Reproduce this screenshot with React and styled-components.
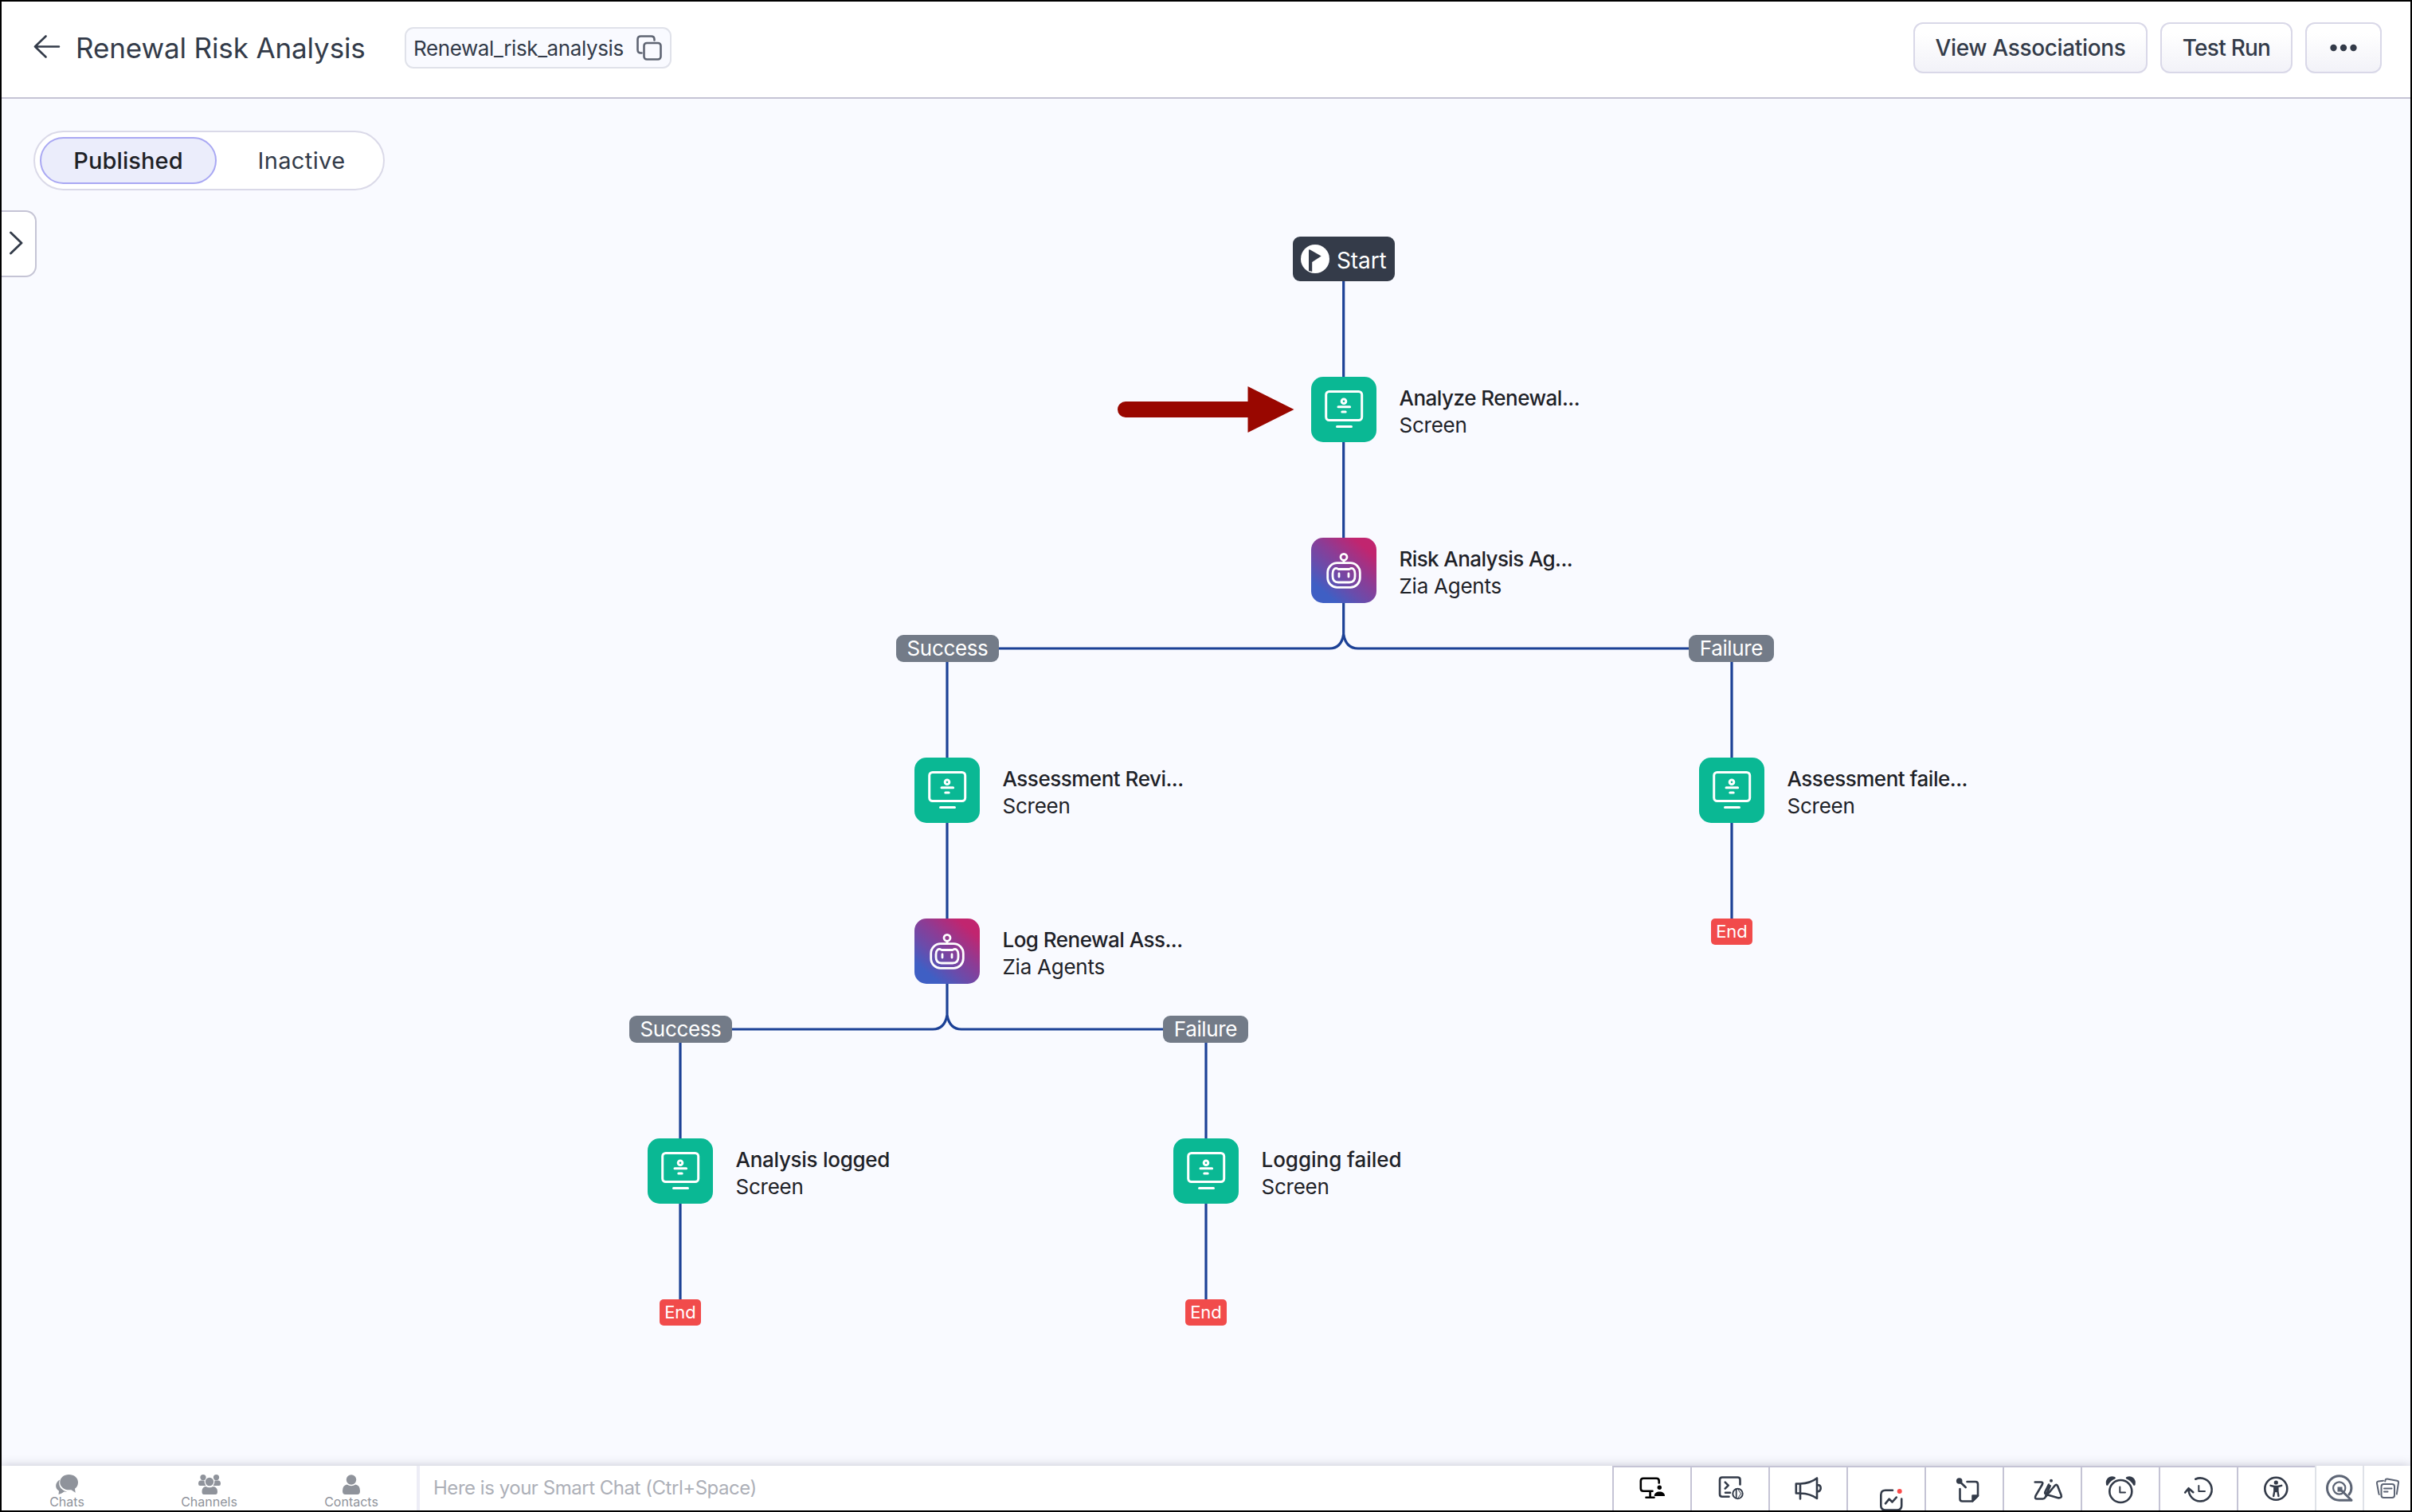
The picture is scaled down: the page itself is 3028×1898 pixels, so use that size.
import React from "react";
import styled, { createGlobalStyle } from "styled-components";

const ink = "#333b49";

const GlobalStyle = createGlobalStyle`
  * { box-sizing: border-box; }
  body {
    margin: 0;
    font-family: Inter, "Liberation Sans", sans-serif;
    color: ${ink};
  }
`;

const Frame = styled.div`
  display: flex;
  flex-direction: column;
  width: 100vw;
  height: 100vh;
  border: 2px solid #000;
  background: #f9faff;
  overflow: hidden;
`;

/* ---------- header ---------- */

const Header = styled.header`
  display: flex;
  align-items: center;
  flex: none;
  height: 122px;
  padding: 0 36px 4px 40px;
  border-bottom: 2px solid #c5c4d5;
  background: #fff;
`;

const BackButton = styled.button`
  display: flex;
  padding: 0 0 2px;
  border: 0;
  background: none;
  color: ${ink};
`;

const Title = styled.h1`
  margin: 0 49px 0 18px;
  width: 364px;
  white-space: nowrap;
  font-size: 35px;
  font-weight: 400;
  line-height: 48px;
  letter-spacing: -0.12px;
`;

const ApiName = styled.div`
  display: flex;
  align-items: center;
  justify-content: space-between;
  width: 335px;
  height: 52px;
  padding: 0 10px 0 9px;
  border: 2px solid #e0e2ea;
  border-radius: 11px;
  background: #f9faff;
  font-size: 26px;
  letter-spacing: -0.4px;
`;

const Actions = styled.div`
  display: flex;
  gap: 16px;
  margin-left: auto;
`;

const ActionButton = styled.button`
  display: flex;
  align-items: center;
  justify-content: center;
  width: ${(p) => p.$width}px;
  height: 64px;
  padding: 0;
  border: 2px solid #d9d8e8;
  border-radius: 12px;
  background: linear-gradient(#fff 20%, #f2f2f8);
  color: ${ink};
  font: 500 28px Inter, "Liberation Sans", sans-serif;
  letter-spacing: ${(p) => p.$tracking || 0}px;
`;

/* ---------- canvas ---------- */

const Canvas = styled.main`
  position: relative;
  display: flex;
  flex-direction: column;
  align-items: flex-start;
  flex: 1;
  min-height: 0;
  padding-top: 40px;
`;

const StatusSwitch = styled.div`
  display: flex;
  width: 441px;
  height: 75px;
  margin-left: 40px;
  padding: 6px;
  border: 2px solid #dad9e8;
  border-radius: 38px;
  background: #fff;
`;

const StatusOption = styled.button`
  flex: ${(p) => (p.$active ? "0 0 222px" : "1")};
  padding: 0 0 0 ${(p) => (p.$active ? 0 : 10)}px;
  border: 2px solid ${(p) => (p.$active ? "#a9a8f3" : "transparent")};
  border-radius: 30px;
  background: ${(p) => (p.$active ? "#ebedfb" : "none")};
  color: ${(p) => (p.$active ? "#1e2126" : ink)};
  font: ${(p) => (p.$active ? 500 : 400)} 29px Inter, "Liberation Sans", sans-serif;
  letter-spacing: ${(p) => (p.$active ? 0.1 : 0.4)}px;
`;

const PanelToggle = styled.button`
  display: flex;
  align-items: center;
  width: 44px;
  height: 84px;
  margin-top: 25px;
  padding: 0 0 3px 10px;
  border: 2px solid #c5c4d5;
  border-left: 0;
  border-radius: 0 14px 14px 0;
  background: #fff;
  color: ${ink};
`;

const Connectors = styled.svg`
  position: absolute;
  top: 0;
  left: 0;
  fill: none;
  stroke: #1c4196;
  stroke-width: 3.2;
`;

const Placed = styled.div`
  position: absolute;
  left: ${(p) => p.$x}px;
  top: ${(p) => p.$y}px;
`;

const StartNode = styled(Placed)`
  display: flex;
  align-items: center;
  gap: 9px;
  width: 128px;
  height: 56px;
  padding-left: 10px;
  border-radius: 9px;
  background: #343b49;
  color: #fff;
  font-size: 28px;
  letter-spacing: -0.1px;
`;

const StartLabel = styled.span`
  padding-top: 3px;
`;

const StepNode = styled(Placed)`
  display: flex;
  align-items: center;
  gap: 28.5px;
`;

const Tile = styled.div`
  width: 82px;
  height: 82px;
  border-radius: 15px;
  background: ${(p) =>
    p.$kind === "agent"
      ? "linear-gradient(40deg, #3f5fc4 18%, #6a4cab 38%, #8c3c95 58%, #c1256f 84%)"
      : "#0ab894"};
`;

const StepText = styled.div`
  display: flex;
  flex-direction: column;
  padding-top: 6px;
  color: #1f2228;
  font-size: 26px;
  line-height: 34px;
  white-space: nowrap;
  letter-spacing: -0.25px;
`;

const StepName = styled.span`
  font-weight: 500;
  letter-spacing: ${(p) => p.$tracking}px;
`;

const BranchChip = styled(Placed)`
  display: flex;
  align-items: center;
  justify-content: center;
  width: ${(p) => (p.$wide ? 129 : 107)}px;
  height: 34px;
  padding-bottom: 1px;
  border-radius: 9px;
  background: #737b88;
  color: #fff;
  font-size: 26px;
  letter-spacing: -0.35px;
`;

const EndChip = styled(Placed)`
  display: flex;
  align-items: center;
  justify-content: center;
  width: 52px;
  height: 33px;
  padding-bottom: 1px;
  border-radius: 5px;
  background: #f14b4b;
  color: #fff;
  font-size: 22px;
`;

/* ---------- footer ---------- */

const Footer = styled.footer`
  position: relative;
  display: flex;
  flex: none;
  height: 56px;
  background: #fff;
  box-shadow: 0 0 12px rgba(60, 60, 90, 0.28);
`;

const ChatTabs = styled.nav`
  display: flex;
  justify-content: center;
  width: 521px;
`;

const ChatTab = styled.div`
  display: flex;
  flex-direction: column;
  align-items: center;
  flex: none;
  width: 178.5px;
  padding-top: 11px;
  color: #8f939b;
  font-size: 16px;
  line-height: 18px;
`;

const SmartChat = styled.div`
  flex: 1;
  padding-left: 17px;
  border-left: 4px solid #ededf6;
  color: #adb0b8;
  font-size: 24px;
  line-height: 55px;
  letter-spacing: -0.47px;
`;

const Tool = styled.div`
  width: 98px;
  border-top: 2px solid #c5c4d5;
  border-left: 2px solid #c5c4d5;
  color: ${(p) => (p.$solid ? "#000" : ink)};
  overflow: hidden;
`;

const SideTool = styled.div`
  width: 60px;
  border-left: 2px solid #dfe2e8;
  color: #5d6575;
  overflow: hidden;
`;

const Glyph = styled.svg`
  display: block;
  fill: none;
  stroke: currentColor;
  stroke-width: ${(p) => p.$weight || 2.6};
  stroke-linecap: round;
  stroke-linejoin: round;
`;

/* ---------- icons ---------- */

const BackIcon = () => (
  <Glyph width="35" height="30" $weight={2.6}>
    <path d="M32 14.500H2M15.500 1.500 2 14.500 15.500 27.500" />
  </Glyph>
);

const CopyIcon = () => (
  <Glyph width="32" height="32" $weight={2.6} color="#5f6573">
    <rect x="9.500" y="10" width="21" height="20.500" rx="3.500" />
    <path d="M6.500 22.500H5.500Q1.500 22.500 1.500 18.500V5.500Q1.500 1.500 5.500 1.500H18.500Q22.500 1.500 22.500 5.500V6.500" />
  </Glyph>
);

const DotsIcon = () => (
  <svg width="34" height="10" fill="currentColor">
    <circle cx="4.500" cy="5" r="4.200" />
    <circle cx="17" cy="5" r="4.200" />
    <circle cx="29.500" cy="5" r="4.200" />
  </svg>
);

const ChevronIcon = () => (
  <Glyph width="20" height="30" $weight={2.8}>
    <path d="M1.500 2 15 15 1.500 28" />
  </Glyph>
);

const FlagIcon = () => (
  <svg width="36" height="36">
    <circle cx="18" cy="18" r="18" fill="#fff" />
    <path d="M10 7.500Q10 5.600 11.700 6.500L25.700 14.600 14.200 22V34L10 33Z" fill="#343b49" />
  </svg>
);

const ScreenIcon = () => (
  <Glyph width="82" height="82" viewBox="0 0 82 82" color="#fff" $weight={3}>
    <rect x="18.700" y="18.500" width="45" height="36" rx="4" />
    <circle cx="41" cy="30.700" r="2.800" />
    <path d="M34 37.800H48.600M38.800 43.900H43.200M32.500 62.500H50.500" />
  </Glyph>
);

const RobotIcon = () => (
  <Glyph width="82" height="82" viewBox="0 0 82 82" color="#fff" $weight={2.8}>
    <circle cx="41" cy="24.300" r="4" />
    <rect x="20.700" y="31.700" width="40.600" height="30.600" rx="12" />
    <path d="M41 28.500V31.500M35 45V49M47 45V49" />
    <path d="M34 39.500C30 36.500 27 40 27 45V48.500Q27 56 34 56H48Q55 56 55 48.500V45C55 40 52 36.500 48 39.500Z" />
  </Glyph>
);

const ChatsIcon = () => (
  <svg width="28" height="25" fill="currentColor">
    <path d="M5 6.500C-1 10-1.500 17.500 4 20.500L3.500 25Q8 23.500 10.500 21.500L14.500 21.700C6 19.500 2.500 13.500 5 6.500Z" />
    <path d="M16.500 0C23 0 28 4.200 28 9.700 28 13.200 26.500 16 24 17.800L24.700 22.700 19.500 19.200C11 20.300 5.300 15.500 5.300 9.700 5.300 4.200 10 0 16.500 0Z" />
  </svg>
);

const ChannelsIcon = () => (
  <svg width="28" height="25" fill="currentColor">
    <circle cx="6" cy="3.600" r="3.600" />
    <circle cx="22.500" cy="3.600" r="3.600" />
    <circle cx="14" cy="9" r="5.200" />
    <path d="M3 7.500H7.500Q7.500 12 9.500 14H2Q0 14 0 11.500 0 7.500 3 7.500ZM25 7.500H20.500Q20.500 12 18.500 14H26Q28 14 28 11.500 28 7.500 25 7.500ZM9.500 15Q14 17.500 18.500 15 24 15.500 24 21.500 24 25 21.500 25H7Q4.500 25 4.500 21.500 4.500 15.500 9.500 15Z" />
  </svg>
);

const ContactsIcon = () => (
  <svg width="24" height="25" fill="currentColor">
    <circle cx="12" cy="6.500" r="6.200" />
    <path d="M6.500 12.500Q12 16 17.500 12.500 23 13.500 23 20.500 23 25 19.500 25H4.500Q1 25 1 20.500 1 13.500 6.500 12.500Z" />
  </svg>
);

const toolIcons = [
  <>
    <path d="M56.700 19.500V17Q56.700 13.800 53.500 13.800H37Q33.800 13.800 33.800 17V26.500Q33.800 29.700 37 29.700H48.500M45.600 30V37.500M40.500 37.800H50.500" />
    <circle cx="57.300" cy="25.300" r="2.700" fill="currentColor" stroke="none" />
    <path d="M50.700 36C50.700 32.500 53.500 30.600 57.400 30.600S64 32.500 64 36Z" fill="currentColor" stroke="none" />
  </>,
  <>
    <path d="M60.500 21.500V15.500Q60.500 12.500 57.500 12.500H38Q35 12.500 35 15.500V33.700Q35 36.700 38 36.700H46.500M41.700 18.700 45.700 22.700 41.700 26.700M42 31.700H48" />
    <circle cx="57.500" cy="33" r="6.200" strokeWidth="2" />
    <path d="M55.700 28.500V37.500" strokeWidth="1.800" />
    <path d="M58.500 28.500 61.500 33 58.500 37.500" strokeWidth="1" />
  </>,
  <path d="M38 20.500H32.800V32.500H38ZM38 20.500Q51 20 59 13.500V39Q51 33 38 32.500V39.500M59.500 22Q63.700 22 63.700 26T59.500 30.500" />,
  <>
    <path d="M56 28.800H47Q41.300 28.800 41.300 34.500V47.800Q41.300 53.500 47 53.500H61.500Q67.200 53.500 67.200 47.800V39.500M47 45.300 51.700 39.700 55.500 43.500 60.700 37.600" />
    <circle cx="64.700" cy="30" r="3" fill="#fa4b4b" stroke="none" />
  </>,
  <>
    <circle cx="41.700" cy="17" r="3.800" fill="currentColor" stroke="none" />
    <path d="M42 17.500 49.700 25M51.500 18H62Q65 18 65 21V35.500L58 42.500H45.500Q42.500 42.500 42.500 39.500V27" />
    <path d="M58.500 35.500H65L58.500 42Z" fill="currentColor" />
  </>,
  <>
    <path d="M38.700 18.500H46Q49.500 18.500 47.800 21.500L39.500 35.700Q37.700 39.500 41.500 39.500H48.500Q50.500 39.500 51.700 37.300L57.700 23.300M56 21.500 51.500 30.500Q50.500 33 53 34L67.500 38.300Q73 38.800 71.500 34.500L67.200 23.500Q65.700 20.500 63.500 23L52.500 36.500" />
    <circle cx="59" cy="16.800" r="2" fill="currentColor" stroke="none" />
  </>,
  <>
    <circle cx="48.300" cy="30" r="14" />
    <path d="M47.300 24.500V31.500H54" strokeWidth="2" />
    <path d="M31.300 21.500C30 15 35 11 40.500 13.200 36.500 14.700 33.500 17.500 31.300 21.500ZM65.300 21.500C66.600 15 61.600 11 56.100 13.200 60.100 14.700 63.100 17.500 65.300 21.500Z" fill="currentColor" />
  </>,
  <>
    <path d="M44.200 14.700A14.500 14.500 0 1 1 35.700 26.500M31.200 31.500 35.500 26.200 41.300 31.200" />
    <path d="M48.300 23V30H56" strokeWidth="2" />
  </>,
  <>
    <circle cx="47.300" cy="26.700" r="14" />
    <circle cx="47.300" cy="19" r="2.600" fill="currentColor" stroke="none" />
    <path d="M40.500 22.800 45 24H49.600L54.200 22.800M45.300 25V30L44.200 36M49.400 25V30L50.400 36M47.300 25V30" strokeWidth="2.400" />
  </>,
];

const SearchQIcon = () => (
  <Glyph width="58" height="56" $weight={3}>
    <path d="M44 43.200H28.700A15.200 15.200 0 1 1 43.900 28Q43.900 32.500 41 36" />
    <circle cx="28.700" cy="28" r="7.600" strokeWidth="2.200" />
    <path d="M26.500 26.500H32.500V32.500H26.500Z" fill="currentColor" stroke="none" />
    <path d="M31 30.500 43.500 42.700" />
  </Glyph>
);

const CardsIcon = () => (
  <Glyph width="58" height="56" $weight={2}>
    <rect x="21.500" y="23" width="16.500" height="17" rx="3" />
    <path d="M18.800 36Q18.600 36 18.300 34.800L16 22Q15.600 19.800 17.800 19.500L24 18.700M26.200 19.500 26.500 18Q27 16.300 29 16.600L41.200 18.700Q43.400 19.200 43 21.300L40.800 35.500M25 28.500H34.500M25 32.500H29.500" />
  </Glyph>
);

/* ---------- data ---------- */

const steps = [
  { x: 1644, y: 349, name: "Analyze Renewal...", type: "Screen", tracking: -0.5 },
  { x: 1644, y: 551, name: "Risk Analysis Ag...", type: "Zia Agents", tracking: -0.6 },
  { x: 1146, y: 827, name: "Assessment Revi...", type: "Screen", tracking: -0.48 },
  { x: 2131, y: 827, name: "Assessment faile...", type: "Screen", tracking: -0.48 },
  { x: 1146, y: 1029, name: "Log Renewal Ass...", type: "Zia Agents", tracking: -0.52 },
  { x: 811, y: 1305, name: "Analysis logged", type: "Screen", tracking: -0.28 },
  { x: 1471, y: 1305, name: "Logging failed", type: "Screen", tracking: -0.03 },
];

const branches = [
  { x: 1123, y: 673, label: "Success" },
  { x: 2118, y: 673, label: "Failure" },
  { x: 788, y: 1151, label: "Success" },
  { x: 1458, y: 1151, label: "Failure" },
];

const ends = [
  { x: 2146, y: 1029 },
  { x: 826, y: 1507 },
  { x: 1486, y: 1507 },
];

const chatTabs = [
  { label: "Chats", Icon: ChatsIcon },
  { label: "Channels", Icon: ChannelsIcon },
  { label: "Contacts", Icon: ContactsIcon },
];

const Step = ({ x, y, name, type, tracking }) => {
  const agent = type === "Zia Agents";
  return (
    <StepNode $x={x} $y={y}>
      <Tile $kind={agent ? "agent" : "screen"}>{agent ? <RobotIcon /> : <ScreenIcon />}</Tile>
      <StepText>
        <StepName $tracking={tracking}>{name}</StepName>
        <span>{type}</span>
      </StepText>
    </StepNode>
  );
};

export default function App() {
  return (
    <>
      <GlobalStyle />
      <Frame>
        <Header>
          <BackButton aria-label="Back"><BackIcon /></BackButton>
          <Title>Renewal Risk Analysis</Title>
          <ApiName>
            <span>Renewal_risk_analysis</span>
            <CopyIcon />
          </ApiName>
          <Actions>
            <ActionButton $width={294} $tracking={-0.35}>View Associations</ActionButton>
            <ActionButton $width={166} $tracking={-0.75}>Test Run</ActionButton>
            <ActionButton $width={96} aria-label="More"><DotsIcon /></ActionButton>
          </Actions>
        </Header>

        <Canvas>
          <StatusSwitch>
            <StatusOption $active>Published</StatusOption>
            <StatusOption>Inactive</StatusOption>
          </StatusSwitch>
          <PanelToggle aria-label="Open panel"><ChevronIcon /></PanelToggle>

          <Connectors width="3024" height="1716">
            <path d="M1684.700 229V349M1684.700 431V551M1684.700 633V672Q1682 690 1667 690H1252M1684.700 672Q1687.500 690 1703 690H2118" />
            <path d="M1187 707V827M1187 909V1029M1187 1111V1150Q1184 1168 1169 1168H917M1187 1150Q1190 1168 1205 1168H1458" />
            <path d="M2172 707V827M2172 909V1029M852 1185V1305M852 1387V1507M1512 1185V1305M1512 1387V1507" />
            <path d="M1564.500 361 1622.500 390 1564.500 419V400H1411A10 10 0 0 1 1411 380H1564.500Z" fill="#990700" stroke="none" />
          </Connectors>

          <StartNode $x={1621} $y={173}>
            <FlagIcon />
            <StartLabel>Start</StartLabel>
          </StartNode>
          {steps.map((s) => <Step key={s.name} {...s} />)}
          {branches.map((b) => (
            <BranchChip key={`${b.x}-${b.y}`} $x={b.x} $y={b.y} $wide={b.label === "Success"}>
              {b.label}
            </BranchChip>
          ))}
          {ends.map((e) => <EndChip key={e.x} $x={e.x} $y={e.y}>End</EndChip>)}
        </Canvas>

        <Footer>
          <ChatTabs>
            {chatTabs.map(({ label, Icon }) => (
              <ChatTab key={label}>
                <Icon />
                <span>{label}</span>
              </ChatTab>
            ))}
          </ChatTabs>
          <SmartChat>Here is your Smart Chat (Ctrl+Space)</SmartChat>
          {toolIcons.map((icon, i) => (
            <Tool key={i} $solid={i === 0}>
              <Glyph width="96" height="54">{icon}</Glyph>
            </Tool>
          ))}
          <SideTool><SearchQIcon /></SideTool>
          <SideTool><CardsIcon /></SideTool>
        </Footer>
      </Frame>
    </>
  );
}
